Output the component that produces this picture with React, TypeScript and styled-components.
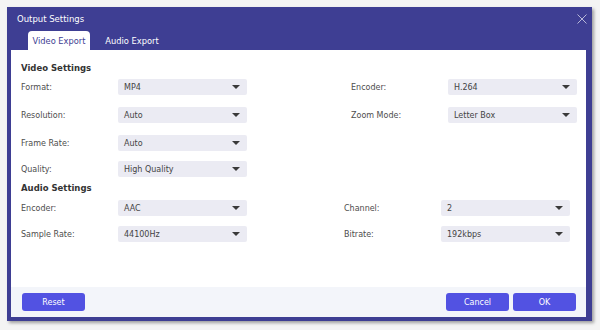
import React from "react";
import styled, { createGlobalStyle } from "styled-components";

const Global = createGlobalStyle`
  html, body { margin: 0; padding: 0; background: #f4f4f4; }
  body { font-family: "DejaVu Sans", Verdana, sans-serif; }
  #root { width: 600px; height: 330px; }
`;

const PURPLE = "#3e3e93";

const Page = styled.div`
  width: 600px;
  height: 330px;
  padding: 7px 8px 9px 7px;
  box-sizing: border-box;
`;

const Dialog = styled.div`
  width: 585px;
  height: 314px;
  background: ${PURPLE};
  box-sizing: border-box;
  padding: 0 6px 4px 4px;
  display: flex;
  flex-direction: column;
  box-shadow: 2px 2px 3px rgba(0,0,0,0.35);
`;

const TitleRow = styled.div`
  height: 24px;
  display: flex;
  align-items: center;
  justify-content: space-between;
  padding: 0 0 0 6px;
  color: #fff;
  font-size: 8.5px;
`;

const Close = styled.div`
  width: 12px;
  height: 12px;
  margin-right: -2px;
  margin-top: -1px;
  display: flex;
`;

const Tabs = styled.div`
  height: 19px;
  display: flex;
  align-items: stretch;
  padding-left: 17px;
`;

const Tab = styled.div<{ $active?: boolean }>`
  width: ${(p) => (p.$active ? "62px" : "84px")};
  display: flex;
  align-items: center;
  justify-content: center;
  font-size: 8.3px;
  color: ${(p) => (p.$active ? PURPLE : "#fff")};
  background: ${(p) => (p.$active ? "#fff" : "transparent")};
  border-radius: 4px 4px 0 0;
`;

const Body = styled.div`
  flex: 1;
  background: #fff;
  padding: 11px 0 0 10px;
  display: flex;
  flex-direction: column;
`;

const Heading = styled.div<{ $top?: number }>`
  font-size: 8.5px;
  font-weight: bold;
  color: #333;
  line-height: 14px;
  margin-top: ${(p) => p.$top ?? 0}px;
  margin-bottom: ${(p) => (p.$top ? 5 : 4)}px;
`;

const Grid = styled.div<{ $gap: number; $rows: string }>`
  display: grid;
  grid-template-columns: 97px 129px ${(p) => p.$gap}px 97px 129px;
  grid-template-rows: ${(p) => p.$rows};
  align-items: start;
`;

const Label = styled.div<{ $col: number; $row: number }>`
  grid-column: ${(p) => p.$col};
  grid-row: ${(p) => p.$row};
  height: 16px;
  font-size: 8px;
  color: #4d4d4d;
  display: flex;
  align-items: center;
`;

const Select = styled.div<{ $col: number; $row: number }>`
  grid-column: ${(p) => p.$col};
  grid-row: ${(p) => p.$row};
  height: 16px;
  background: #ebebf3;
  border-radius: 2px;
  display: flex;
  align-items: center;
  justify-content: space-between;
  padding: 0 7px 0 6px;
  font-size: 8px;
  color: #444;
`;

const Caret = styled.span`
  width: 0;
  height: 0;
  border-left: 4px solid transparent;
  border-right: 4px solid transparent;
  border-top: 4px solid #3a3a3a;
`;

const Spacer = styled.div`
  flex: 1;
`;

const Footer = styled.div`
  height: 30px;
  background: #f3f5fa;
  display: flex;
  align-items: center;
  padding: 0 10px 0 11px;
  gap: 4px;
`;

const Button = styled.button<{ $push?: boolean }>`
  width: 63px;
  height: 18px;
  border: none;
  border-radius: 3px;
  background: #5252e2;
  color: #fff;
  font-family: "DejaVu Sans", Verdana, sans-serif;
  font-size: 8px;
  padding: 0;
  margin-left: ${(p) => (p.$push ? "auto" : "0")};
`;

type Field = { label: string; value: string; col: 0 | 1; row: number };

const video: Field[] = [
  { label: "Format:", value: "MP4", col: 0, row: 1 },
  { label: "Resolution:", value: "Auto", col: 0, row: 2 },
  { label: "Frame Rate:", value: "Auto", col: 0, row: 3 },
  { label: "Quality:", value: "High Quality", col: 0, row: 4 },
  { label: "Encoder:", value: "H.264", col: 1, row: 1 },
  { label: "Zoom Mode:", value: "Letter Box", col: 1, row: 2 },
];

const audio: Field[] = [
  { label: "Encoder:", value: "AAC", col: 0, row: 1 },
  { label: "Sample Rate:", value: "44100Hz", col: 0, row: 2 },
  { label: "Channel:", value: "2", col: 1, row: 1 },
  { label: "Bitrate:", value: "192kbps", col: 1, row: 2 },
];

const Fields = ({ items }: { items: Field[] }) => (
  <>
    {items.map((f) => (
      <React.Fragment key={f.label + f.col}>
        <Label $col={f.col === 0 ? 1 : 4} $row={f.row}>{f.label}</Label>
        <Select $col={f.col === 0 ? 2 : 5} $row={f.row}>
          <span>{f.value}</span>
          <Caret />
        </Select>
      </React.Fragment>
    ))}
  </>
);

export default function App() {
  return (
    <>
      <Global />
      <Page>
        <Dialog>
          <TitleRow>
            <span>Output Settings</span>
            <Close>
              <svg width="12" height="12" viewBox="0 0 12 12">
                <path d="M1.5 1.5 L10.5 10.5 M10.5 1.5 L1.5 10.5" stroke="#b8b8d8" strokeWidth="1" fill="none" />
              </svg>
            </Close>
          </TitleRow>
          <Tabs>
            <Tab $active>Video Export</Tab>
            <Tab>Audio Export</Tab>
          </Tabs>
          <Body>
            <Heading>Video Settings</Heading>
            <Grid $gap={104} $rows="28px 28px 26px 16px">
              <Fields items={video} />
            </Grid>
            <Heading $top={4}>Audio Settings</Heading>
            <Grid $gap={97} $rows="26px 16px">
              <Fields items={audio} />
            </Grid>
            <Spacer />
          </Body>
          <Footer>
            <Button>Reset</Button>
            <Button $push>Cancel</Button>
            <Button>OK</Button>
          </Footer>
        </Dialog>
      </Page>
    </>
  );
}
